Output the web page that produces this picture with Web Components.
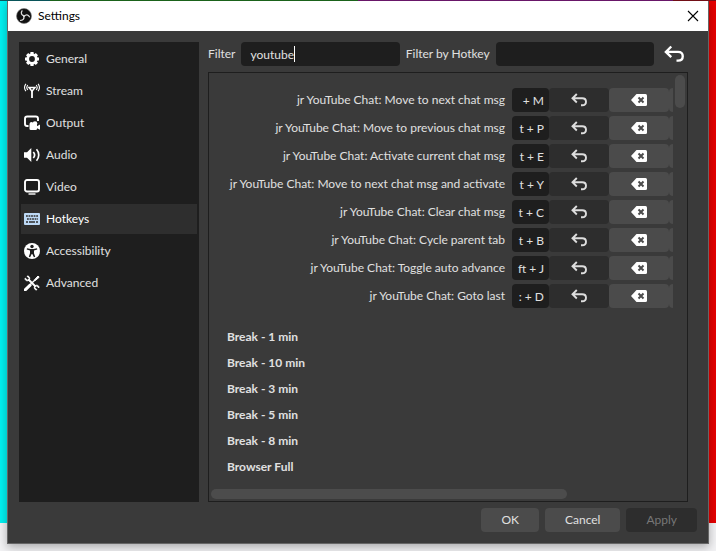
<!DOCTYPE html>
<html lang="en">
<head>
<meta charset="utf-8">
<title>Settings</title>
<style>
  html { height: 100%; }
  body {
    margin: 0; min-height: 100vh; box-sizing: border-box; padding: 1px 7px 7px;
    display: flex; flex-direction: column;
    font: 12px/16px Lato, "Open Sans", sans-serif; color: #e0e0e0;
    background:
      linear-gradient(90deg, #0a5a60 7%, #1c6a1c 7% 50%, #701870 50% 94%, #7a1018 94%) 0 0 / 100% 1px no-repeat,
      linear-gradient(#00f2f2, #00f2f2) 0 0 / 50% calc(100% - 28px) no-repeat,
      linear-gradient(#e60000, #e60000) 100% 0 / 50% calc(100% - 28px) no-repeat,
      #f2f2f4;
  }
</style>
</head>
<body>
<settings-window></settings-window>
<script>
const svg = (size, body) =>
  `<svg width="${size}" height="${size}" viewBox="0 0 16 16" fill="none" stroke="currentColor" aria-hidden="true">${body}</svg>`;

const ICONS = {
  obs: `<circle cx="8" cy="8" r="7.5" fill="#111" stroke="#777" stroke-width=".6"/>
    <g stroke="#ddd" stroke-width="1.3" stroke-linecap="round">
    <path d="M8.2 7.6C5.5 7.4 4.6 5 6 2.9"/>
    <path d="M8.2 7.6C5.5 7.4 4.6 5 6 2.9" transform="rotate(120 8 8)"/>
    <path d="M8.2 7.6C5.5 7.4 4.6 5 6 2.9" transform="rotate(240 8 8)"/></g>`,
  general: `<circle cx="8" cy="8" r="4.3" stroke-width="2.8"/>
    <path stroke-width="3.2" d="M8 1v2.500M8 12.500V15M1 8h2.500M12.500 8H15M3.100 3.100l1.600 1.600M11.300 11.300l1.600 1.600M3.100 12.900l1.600-1.600M11.300 4.700l1.600-1.600"/>`,
  stream: `<path d="M8 8v7" stroke-width="1.8"/><path d="M5 4.500h6L8 8.300z" stroke-width="1.500"/>
    <path stroke-width="1.100" d="M3.800 2C2.600 3.500 2.600 5.500 3.800 7M1.900.8C.2 3.100.2 5.900 1.900 8.200M12.200 2c1.200 1.500 1.200 3.500 0 5M14.100.8c1.700 2.300 1.700 5.100 0 7.400"/>`,
  output: `<path d="M4.500 11H3Q1 11 1 9V3.800Q1 1.500 3.300 1.500h8.400Q14 1.500 14 3.800V6" stroke-width="1.900"/>
    <g fill="currentColor" stroke="none"><rect x="5.500" y="8.700" width="7.500" height="6.300" rx="1.300"/><circle cx="7.500" cy="8.800" r="1.900"/><circle cx="11" cy="8.600" r="2.300"/><path d="M12.500 11.500 16 9.500v5.200l-3.500-1.800z"/></g>`,
  audio: `<path d="M0 5.200h3L7.300 1v14L3 10.800H0z" fill="currentColor" stroke="none"/>
    <path d="M9.300 5c1.500 1.700 1.500 4.300 0 6M12.500 2.300c3 3.300 3 8.100 0 11.400" stroke-width="1.700"/>`,
  video: `<rect x="1" y="1" width="14" height="11.500" rx="2" stroke-width="1.900"/><path d="M4.500 15h7" stroke-width="1.400"/>`,
  hotkeys: `<rect x="0" y="2" width="16" height="12" rx="1" fill="#bcd8f5" stroke="none"/>
    <g stroke="#2e2e2e" stroke-width="1.700"><path d="M2 5h12" stroke-dasharray="1.800 .75"/><path d="M3 8h11" stroke-dasharray="1.800 .75"/><path d="M2 11h2M5 11h6M12 11h2"/></g>`,
  accessibility: `<circle cx="8" cy="8" r="8" fill="currentColor" stroke="none"/>
    <g fill="#1e1e1e" stroke="none"><circle cx="8" cy="3.500" r="1.700"/><path d="M3 5.300 6.500 6h3l3.500-.7.300 1.200L10 7.600v2.600l1.200 3.600-1.300.5L8.300 11h-.6l-1.600 3.300-1.300-.5L6 10.200V7.600L2.700 6.500z"/></g>`,
  advanced: `<path d="M6 9.800 11 5" stroke-width="1.300"/><path d="M10.500 4.800 14 1l1.200 1.200L11.300 5.600z" fill="currentColor" stroke-width="1"/>
    <path d="m1.200 14.900 4.900-4.700" stroke-width="3" stroke-linecap="round"/>
    <path d="m4.500 4.500 7 7" stroke-width="1.900"/>
    <path d="M3 1.200 5.200 3.400 3.400 5.200 1.200 3C.5 5.500 3.200 6.500 5 5.200 6.500 3.500 5.500.6 3 1.200zM13 14.800l-2.200-2.200 1.800-1.800 2.200 2.200c.7-2.500-2-3.500-3.800-2.200-1.500 1.700-.5 4.600 2 4z" fill="currentColor" stroke-width=".9"/>`,
  undo: `<path d="M5.800 2 1.500 6.300l4.300 4.200M1.800 6.300h9.400q3.800 0 3.800 3.500t-3.800 3.500H10" stroke-width="1.900"/>`,
  erase: `<path d="M5.500 2H14.500Q16 2 16 3.500v9Q16 14 14.500 14h-9L0 8z" fill="currentColor" stroke="none"/>
    <path d="m7.500 5.500 5 5m0-5-5 5" stroke="#4b4b4b" stroke-width="2"/>`,
  close: `<path d="m3 3 10 10M13 3 3 13" stroke-width="1.100"/>`
};

const RESET = `*,*::before,*::after{box-sizing:border-box}
  button,input{font:inherit;color:inherit;border:0;margin:0;padding:0;background:none;border-radius:4px;min-width:0}
  button{cursor:pointer} svg{display:block;flex:none} input{background:#1e1e1e;outline:0}`;

function define(name, css, html) {
  customElements.define(name, class extends HTMLElement {
    constructor() {
      super();
      const t = document.createElement('template');
      t.innerHTML = `<style>${RESET}${css}</style>${html(this)}`;
      this.attachShadow({ mode: 'open' }).append(t.content.cloneNode(true));
    }
  });
}

define('app-icon', `:host{display:block;flex:none}`,
  el => svg(el.getAttribute('size') || 16, ICONS[el.getAttribute('name')]));

define('title-bar', `
  :host{display:flex;align-items:center;height:30px;padding:0 7px 0 8px;gap:6px;background:#fff;color:#000;flex:none}
  h1{font:inherit;margin:0;flex:1}
  button{display:grid;place-items:center;width:16px;height:16px}`,
  () => `<app-icon name="obs"></app-icon><h1><slot></slot></h1><button aria-label="Close"><app-icon name="close"></app-icon></button>`);

define('nav-item', `
  :host{display:block}
  button{display:flex;align-items:center;gap:6px;width:100%;height:30px;padding:0 3px;text-align:left;border-radius:0}
  app-icon{color:#fff}
  :host([selected]) button{background:#2e2e2e;color:#fff}`,
  el => `<button ${el.hasAttribute('selected') ? 'aria-current="page"' : ''}><app-icon name="${el.getAttribute('icon')}"></app-icon><span><slot></slot></span></button>`);

define('side-nav', `
  :host{display:block;background:#1e1e1e;padding:2px}
  nav{display:grid;gap:2px}`,
  () => `<nav aria-label="Categories"><slot></slot></nav>`);

define('filter-bar', `
  :host{display:grid;grid-template-columns:auto 1fr auto 1fr auto;align-items:center;gap:6px;height:24px;flex:none}
  input{display:block;height:24px;width:100%;padding:0 9px}
  .field{position:relative}
  .caret{position:absolute;left:53px;top:4px;width:1px;height:16px;background:#fff}
  button{display:grid;place-items:center;width:28px;height:24px;color:#fff}`,
  () => `<label for="f">Filter</label><div class="field"><input id="f" value="youtube"><span class="caret"></span></div>
    <label for="k">Filter by Hotkey</label><input id="k"><button aria-label="Clear filters"><app-icon name="undo" size="20"></app-icon></button>`);

define('hotkey-row', `
  :host{display:grid;grid-template-columns:1fr 37px 60px 60px 60px;margin-right:-56px;height:24px;align-items:center}
  label{text-align:right;padding-right:7px;white-space:nowrap}
  input{height:24px;width:100%;padding:0 5px;text-align:right}
  button{display:grid;place-items:center;height:24px;background:#4b4b4b;color:#fff}
  .undo{background:#2d2d2d;color:#ddd}`,
  el => `<label for="k"><slot></slot></label><input id="k" value="${el.getAttribute('keys')}">
    <button class="undo" aria-label="Revert"><app-icon name="undo"></app-icon></button>
    <button aria-label="Clear"><app-icon name="erase"></app-icon></button><button aria-label="Add"></button>`);

define('scroll-frame', `
  :host{display:grid;grid-template:minmax(0,1fr) 10px / minmax(0,1fr) 10px;gap:2px;border:1px solid #1e1e1e;padding:2px;min-height:0;flex:1}
  .view{overflow:hidden;padding:13px 0 0 16px}
  i{display:block;background:#4c4c4c;border-radius:5px}
  .v{height:8%}.h{width:77%}`,
  () => `<div class="view"><slot></slot></div><i class="v"></i><i class="h"></i>`);

define('hotkey-list', `
  :host{display:block}
  .rows{display:grid;gap:4px}
  .groups{margin-top:16px}
  h2{font:inherit;font-weight:700;line-height:26px;margin:0}`,
  () => `<div class="rows">${[
    ['Move to next chat msg', '+ M'], ['Move to previous chat msg', 't + P'], ['Activate current chat msg', 't + E'],
    ['Move to next chat msg and activate', 't + Y'], ['Clear chat msg', 't + C'], ['Cycle parent tab', 't + B'],
    ['Toggle auto advance', 'ft + J'], ['Goto last', ': + D']
  ].map(([t, k]) => `<hotkey-row keys="${k}">jr YouTube Chat: ${t}</hotkey-row>`).join('')}</div>
  <div class="groups">${['Break - 1 min', 'Break - 10 min', 'Break - 3 min', 'Break - 5 min', 'Break - 8 min', 'Browser Full']
    .map(t => `<h2>${t}</h2>`).join('')}</div>`);

define('dialog-buttons', `
  :host{display:flex;justify-content:flex-end;gap:6px;padding:6px 11px 11px 0;flex:none}
  button{height:24px;background:#4b4b4b;padding:0 20px}
  button:disabled{background:#2d2d2d;color:#777}`,
  () => `<button>OK</button><button>Cancel</button><button disabled>Apply</button>`);

define('settings-window', `
  :host{display:flex;flex-direction:column;flex:1;min-height:0;background:#3a3a3a;border:1px solid #666;border-top:0;box-shadow:0 3px 9px rgba(0,0,0,.3)}
  main{flex:1;min-height:0;display:grid;grid-template-columns:180px minmax(0,1fr);gap:9px;padding:11px 20px 0 11px}
  section{display:flex;flex-direction:column;gap:6px;min-height:0}`,
  () => `<title-bar>Settings</title-bar>
  <main><side-nav>${['General', 'Stream', 'Output', 'Audio', 'Video', 'Hotkeys', 'Accessibility', 'Advanced']
    .map(n => `<nav-item icon="${n.toLowerCase()}" ${n === 'Hotkeys' ? 'selected' : ''}>${n}</nav-item>`).join('')}</side-nav>
  <section><filter-bar></filter-bar><scroll-frame><hotkey-list></hotkey-list></scroll-frame></section></main>
  <dialog-buttons></dialog-buttons>`);
</script>
</body>
</html>
